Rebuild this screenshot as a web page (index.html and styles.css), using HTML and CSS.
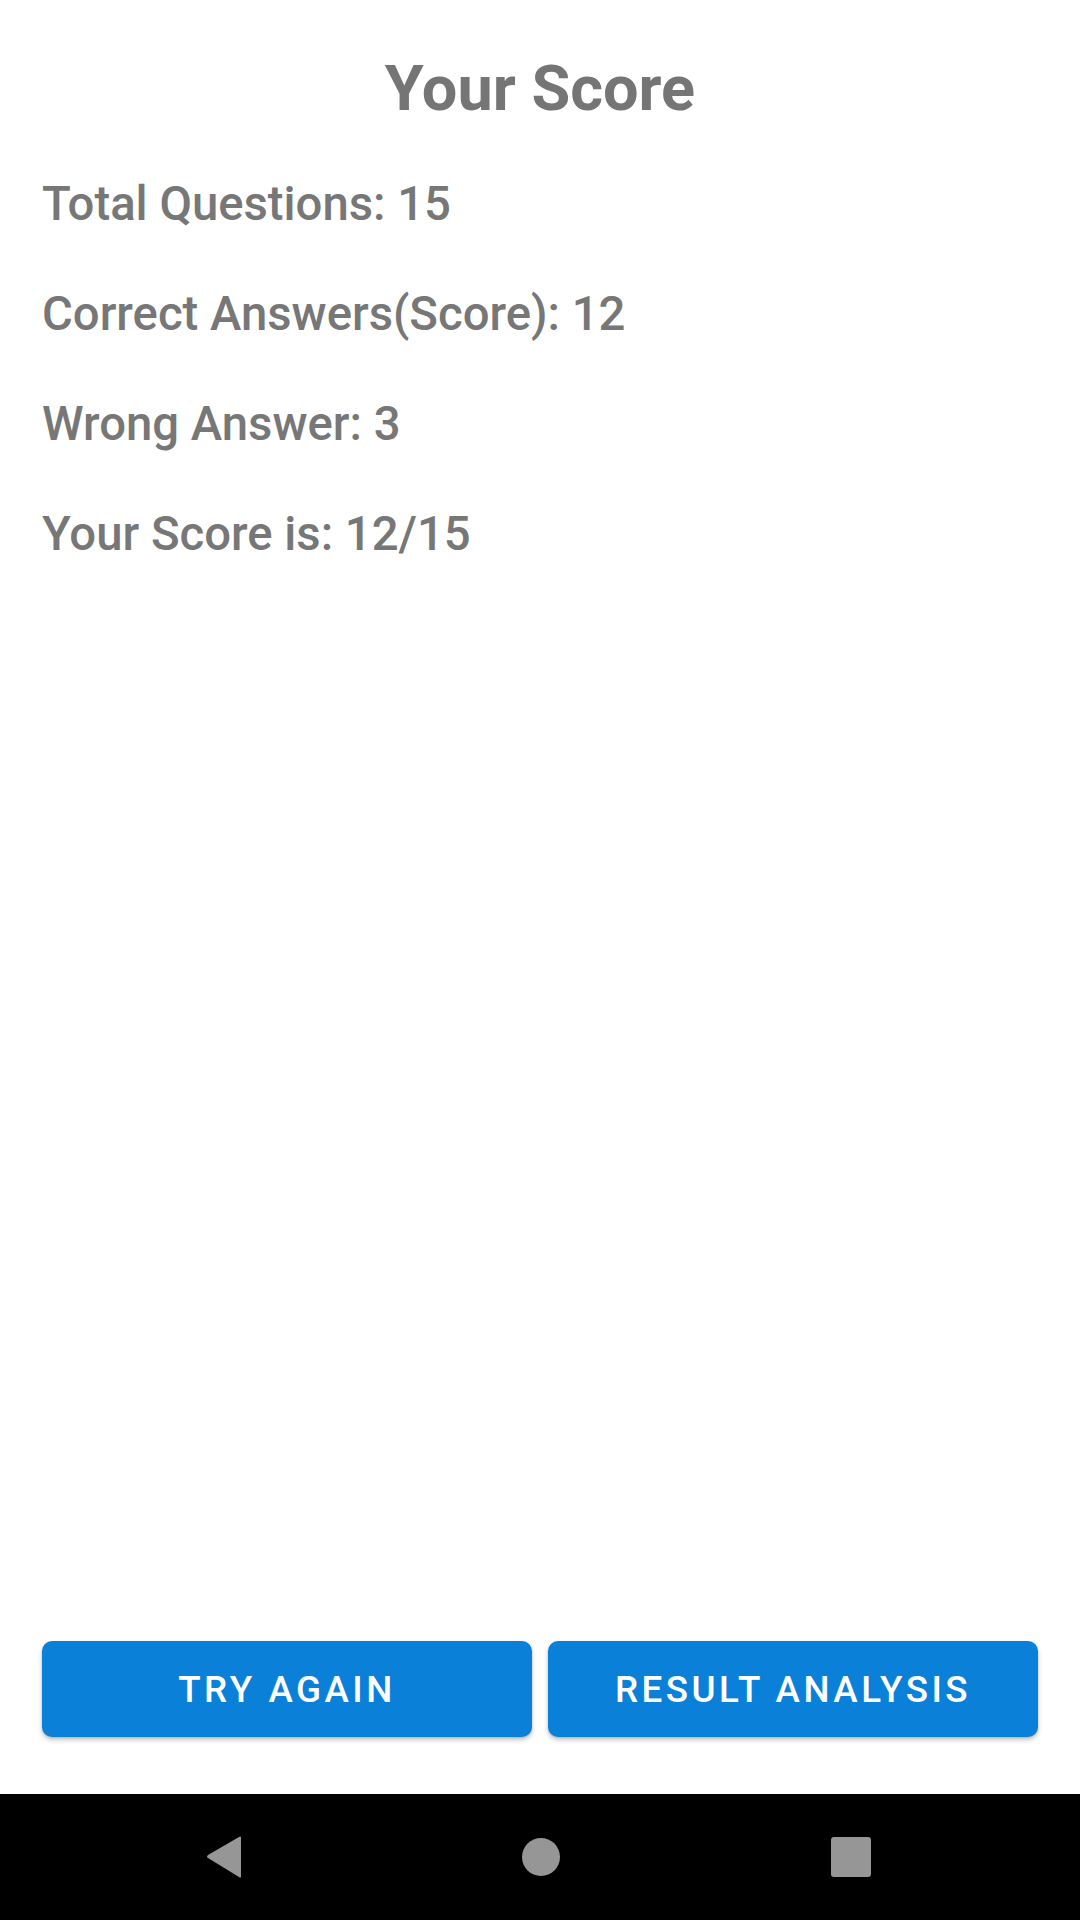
FILE: index.html
```html
<!DOCTYPE html>
<html>
<head>
<meta charset="utf-8">
<link rel="stylesheet" href="styles.css">
</head>
<body>
<div class="screen">
  <main class="content">
    <h1 class="title">Your Score</h1>
    <div class="stats">
      <p class="stat">Total Questions: 15</p>
      <p class="stat">Correct Answers(Score): 12</p>
      <p class="stat">Wrong Answer: 3</p>
      <p class="stat">Your Score is: 12/15</p>
    </div>
    <div class="actions">
      <button class="btn">TRY AGAIN</button>
      <button class="btn">RESULT ANALYSIS</button>
    </div>
  </main>
  <nav class="navbar">
    <svg class="nav-icon nav-back" width="40" height="44" viewBox="0 0 40 44"><path d="M37 2 L37 42 Q36 43 35 42 L4 23 Q2 22 4 20 L35 2 Q36 1 37 2 Z" fill="#969696"/></svg>
    <svg class="nav-icon nav-home" width="40" height="40" viewBox="0 0 40 40"><circle cx="20" cy="20" r="19" fill="#969696"/></svg>
    <svg class="nav-icon nav-recent" width="40" height="40" viewBox="0 0 40 40"><rect x="0" y="0" width="40" height="40" rx="3" fill="#969696"/></svg>
  </nav>
</div>
</body>
</html>
```
FILE: styles.css
```css
* { box-sizing: border-box; }
html, body { margin: 0; padding: 0; background: #fff; }
body { font-family: Roboto, "Liberation Sans", sans-serif; }
.screen {
  width: 1080px;
  height: 1920px;
  display: flex;
  flex-direction: column;
}
.content {
  flex: 1;
  display: flex;
  flex-direction: column;
  padding: 52px 42px 57px;
}
.title {
  margin: 0;
  font-size: 63px;
  line-height: 74px;
  font-weight: 700;
  color: #757575;
  text-align: center;
}
.stats {
  margin-top: 23px;
  flex: 1;
}
.stat {
  margin: 0;
  font-size: 47.25px;
  line-height: 110px;
  color: #777777;
  font-weight: 500;
}
.actions {
  display: flex;
  gap: 16px;
}
.btn {
  flex: 1;
  height: 96px;
  border: none;
  border-radius: 10px;
  background: #0b80d8;
  color: #fff;
  font-family: Roboto, "Liberation Sans", sans-serif;
  font-weight: 500;
  font-size: 36.75px;
  letter-spacing: 0.095em;
  box-shadow: 0 3px 5px rgba(0,0,0,0.22), 0 1px 2px rgba(0,0,0,0.12);
  padding: 0;
}
.navbar {
  height: 126px;
  background: #000;
  display: flex;
  align-items: center;
  padding-left: 204px;
}
.nav-icon { display: block; flex: none; }
.nav-home { margin-left: 277px; }
.nav-recent { margin-left: 270px; }
```
